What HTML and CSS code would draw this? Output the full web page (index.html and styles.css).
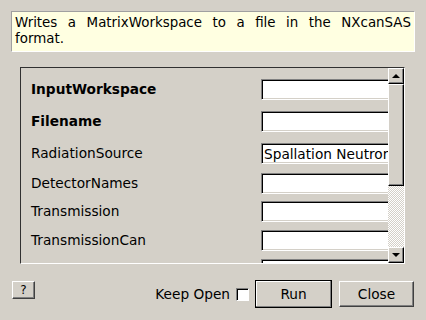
FILE: index.html
```html
<!DOCTYPE html>
<html lang="en">
<head>
  <meta charset="UTF-8">
  <title>SaveNXcanSAS</title>
  <link rel="stylesheet" href="styles.css">
</head>
<body>

<div class="description">
  Writes a MatrixWorkspace to a file in the NXcanSAS format.
</div>

<div class="props-frame">
  <div class="props">
    <div class="prop-row wide">
      <label class="required">InputWorkspace</label>
      <div class="field"></div>
    </div>
    <div class="prop-row wide">
      <label class="required">Filename</label>
      <div class="field"></div>
    </div>
    <div class="prop-row mid">
      <label>RadiationSource</label>
      <div class="field">Spallation Neutron Source</div>
    </div>
    <div class="prop-row snug">
      <label>DetectorNames</label>
      <div class="field"></div>
    </div>
    <div class="prop-row">
      <label>Transmission</label>
      <div class="field"></div>
    </div>
    <div class="prop-row">
      <label>TransmissionCan</label>
      <div class="field"></div>
    </div>
    <div class="prop-row">
      <label></label>
      <div class="field"></div>
    </div>
  </div>

  <!-- barre de défilement -->
  <div class="scrollbar">
    <div class="sb-btn"><span class="arrow-up"></span></div>
    <div class="sb-thumb"></div>
    <div class="sb-trough"></div>
    <div class="sb-btn"><span class="arrow-down"></span></div>
  </div>
</div>

<div class="button-bar">
  <button class="btn help">?</button>
  <div class="spacer"></div>
  <span class="keep-open">Keep Open</span>
  <span class="checkbox"></span>
  <button class="btn run">Run</button>
  <button class="btn close">Close</button>
</div>

</body>
</html>
```

FILE: styles.css
```css
body {
  margin: 0;
  width: 426px;
  height: 320px;
  overflow: hidden;
  background-color: #d4d0c8;
  font-family: 'DejaVu Sans', 'Liberation Sans', sans-serif;
  font-size: 13.7px;
  color: #000;
}

.description {
  margin: 11px 11px 0 11px;
  height: 32px;
  padding: 3px 3px 4px 3px;
  line-height: 16px;
  font-size: 13.4px;
  text-align: justify;
  text-align-last: left;
  background-color: #ffffe1;
  border: 1px solid;
  border-color: #a0a0a0 #ffffff #ffffff #a0a0a0;
}

.props-frame {
  margin: 15px 0 0 20px;
  width: 383px;
  height: 195px;
  display: flex;
  border: 1px solid;
  border-color: #303030 #ffffff #ffffff #303030;
  overflow: hidden;
}

.props {
  flex: 1;
  padding-top: 10px;
  overflow: hidden;
}

.prop-row {
  display: flex;
  align-items: center;
  height: 22px;
  margin-bottom: 7px;
  padding-left: 10px;
  white-space: nowrap;
}

.prop-row.wide {
  margin-bottom: 10px;
}

.prop-row.mid {
  margin-bottom: 8px;
}

.prop-row.snug {
  margin-bottom: 6px;
}

.prop-row label {
  width: 230px;
  flex-shrink: 0;
}

.prop-row label.required {
  font-weight: bold;
}

.field {
  flex-shrink: 0;
  width: 160px;
  height: 18px;
  line-height: 18px;
  padding-left: 2px;
  background: #ffffff;
  border: 1px solid;
  border-color: #808080 #ffffff #ffffff #808080;
  box-shadow: inset 1px 1px 0 #000, inset -1px -1px 0 #d4d0c8;
  padding-top: 1px;
  overflow: hidden;
}

.scrollbar {
  width: 16px;
  display: flex;
  flex-direction: column;
  background: #d4d0c8;
}

.sb-btn,
.sb-thumb {
  box-sizing: border-box;
  border: 1px solid;
  border-color: #ffffff #000000 #000000 #ffffff;
  box-shadow: inset -1px -1px 0 #808080;
  background: #d4d0c8;
}

.sb-btn {
  height: 16px;
  display: flex;
  align-items: center;
  justify-content: center;
}

.sb-thumb {
  height: 102px;
}

.sb-trough {
  flex: 1;
  background-color: #ffffff;
  background-image: conic-gradient(#d4d0c8 25%, #ffffff 0 50%, #d4d0c8 0 75%, #ffffff 0);
  background-size: 2px 2px;
}

.arrow-up,
.arrow-down {
  width: 0;
  height: 0;
  border-left: 4px solid transparent;
  border-right: 4px solid transparent;
}

.arrow-up {
  border-bottom: 4px solid #000;
}

.arrow-down {
  border-top: 4px solid #000;
}

.button-bar {
  display: flex;
  align-items: center;
  height: 28px;
  margin-top: 16px;
  padding: 0 12px;
}

.spacer {
  flex: 1;
}

.btn {
  box-sizing: border-box;
  font-family: inherit;
  font-size: 13.7px;
  color: #000;
  background: #d4d0c8;
  border: 1px solid;
  border-color: #ffffff #404040 #404040 #ffffff;
  box-shadow: inset -1px -1px 0 #808080;
  padding: 0;
  cursor: pointer;
}

.help {
  align-self: flex-start;
  margin-top: 1px;
  width: 23px;
  height: 18px;
  font-size: 12px;
}

.keep-open {
  margin-right: 6px;
}

.checkbox {
  box-sizing: border-box;
  width: 13px;
  height: 13px;
  background: #ffffff;
  border: 1px solid;
  border-color: #808080 #ffffff #ffffff #808080;
  box-shadow: inset 1px 1px 0 #000;
  margin-right: 6px;
}

.run {
  width: 77px;
  height: 28px;
  border: none;
  box-shadow: inset 1px 1px 0 #000, inset -1px -1px 0 #000, inset -2px -2px 0 #808080, inset 2px 2px 0 #ffffff;
  margin-right: 7px;
}

.close {
  width: 75px;
  height: 26px;
}
```
